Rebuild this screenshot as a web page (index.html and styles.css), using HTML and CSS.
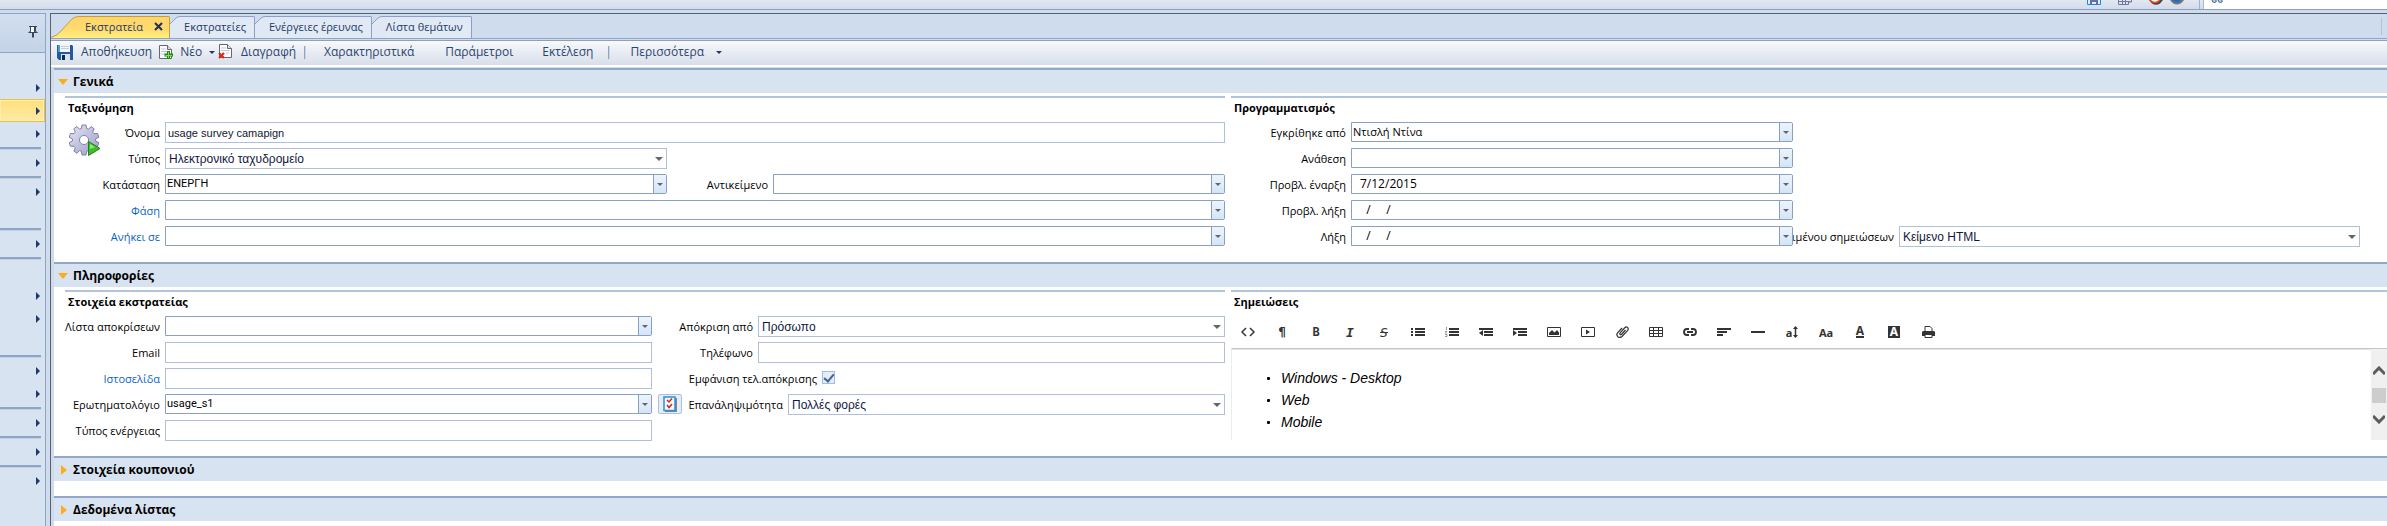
FILE: index.html
```html
<!DOCTYPE html>
<html lang="el">
<head>
<meta charset="utf-8">
<title>Εκστρατεία</title>
<link rel="stylesheet" href="styles.css">
</head>
<body>
<header class="topbar">
  <div class="top-icons">
    <svg width="14" height="5" viewBox="0 0 14 5"><path d="M.5 0v4.500h13V0" fill="#e4eefb" stroke="#0a8cf0"/><path d="M3 0h8v4H9V2H5v2H3z" fill="#6d6ba8"/></svg>
    <svg width="14" height="5" viewBox="0 0 14 5"><path d="M.5 0v4.500h10V2h3V0M.5 1.500h12M4.500 0v4M7.500 0v4" fill="none" stroke="#777799"/></svg>
    <svg width="14" height="5" viewBox="0 0 14 5"><path d="M0 0h14l-3 3.500Q7 6 3 3.500z" fill="#444"/><path d="M1 0q5 5 10 0" fill="#fff" stroke="#f04a20" stroke-width="1.500"/></svg>
    <svg width="14" height="5" viewBox="0 0 14 5"><path d="M0 0h14q-3 4.500-7 4.500T0 0z" fill="#777"/><path d="M2 0h9q-4 5-9 0z" fill="#1c6fc4"/></svg>
  </div>
  <div class="top-search">
    <svg width="12" height="4" viewBox="0 0 12 4"><path d="M1 0q0 2.500 2.500 2.500T5 0M7 0q0 2.500 2.500 2.500T11 0" fill="#9fd0f0" stroke="#55617a"/></svg>
  </div>
</header>

<div class="shell">
  <nav class="side" aria-label="Μενού">
    <div class="side-head">
      <svg width="10" height="12" viewBox="0 0 10 12"><path d="M3 1h3v5H3z" fill="#fff"/><path d="M1 .5h8M2.500 .5v5M7.500 .5v5M1 6.500L2.500 5M9 6.500L7.500 5M.5 6.500h9M4.500 7v4.500M5.500 7v4.500M6.500 1v5" fill="none" stroke="#3c4656"/></svg>
    </div>
    <ul class="side-list">
      <li></li>
      <li class="more"></li>
      <li class="more on"></li>
      <li class="more"></li>
      <li class="sep"></li>
      <li class="more"></li>
      <li class="sep"></li>
      <li class="more"></li>
      <li></li>
      <li class="sep"></li>
      <li class="more"></li>
      <li class="sep"></li>
      <li></li>
      <li class="more"></li>
      <li class="more"></li>
      <li></li>
      <li class="sep"></li>
      <li class="more"></li>
      <li class="more"></li>
      <li class="sep"></li>
      <li class="more"></li>
      <li class="sep"></li>
      <li class="more"></li>
      <li class="sep"></li>
      <li class="more"></li>
    </ul>
  </nav>

  <main class="main">
    <div class="tabs" role="tablist">
      <button class="tab active" role="tab" aria-selected="true">
        <svg class="slope" width="34" height="22" viewBox="0 0 34 22"><defs><linearGradient id="gold" x1="0" y1="0" x2="0" y2="1"><stop offset="0" stop-color="#ffd568"/><stop offset=".6" stop-color="#ffdb70"/><stop offset="1" stop-color="#fff07c"/></linearGradient></defs><path d="M0 22Q6 20 10 15L21 3Q24 .5 28 .5H34V22z" fill="url(#gold)"/><path d="M0 21.500Q6 20 10 15L21 3Q24 .5 28 .5H34" fill="none" stroke="#c99b3f"/></svg>
        <span class="tab-body">Εκστρατεία<svg class="close" width="9" height="9" viewBox="0 0 9 9"><path d="M1 1l7 7M8 1L1 8" stroke="#1f3050" stroke-width="2"/></svg></span>
      </button>
      <button class="tab" role="tab"><svg class="slope" width="14" height="22" viewBox="0 0 14 22"><path d="M0 22V8L6 2Q8 .5 10 .5H14V22z" fill="#dfe8f4"/><path d="M0 8L6 2Q8 .5 10 .5H14" fill="none" stroke="#8ba0c4"/></svg><span class="tab-body">Εκστρατείες</span></button>
      <button class="tab" role="tab"><svg class="slope" width="14" height="22" viewBox="0 0 14 22"><path d="M0 22V8L6 2Q8 .5 10 .5H14V22z" fill="#dfe8f4"/><path d="M0 8L6 2Q8 .5 10 .5H14" fill="none" stroke="#8ba0c4"/></svg><span class="tab-body">Ενέργειες έρευνας</span></button>
      <button class="tab" role="tab"><svg class="slope" width="14" height="22" viewBox="0 0 14 22"><path d="M0 22V8L6 2Q8 .5 10 .5H14V22z" fill="#dfe8f4"/><path d="M0 8L6 2Q8 .5 10 .5H14" fill="none" stroke="#8ba0c4"/></svg><span class="tab-body">Λίστα θεμάτων</span></button>
      <i class="strip-end"></i>
    </div>

    <div class="toolbar" role="toolbar">
      <button class="tool"><svg width="16" height="16" viewBox="0 0 16 16"><path d="M0 1h15l1 1v14H2l-2-2z" fill="#24599c"/><path d="M1 1h2v7H1z" fill="#4f9be0"/><path d="M3 0h10v8H3z" fill="#f2f5f8"/><path d="M4 2h8v1H4zM4 4h8v1H4z" fill="#c4ccd6"/><path d="M4 10h9v6H4z" fill="#d9e2ec"/><path d="M5 11h3v5H5z" fill="#12284a"/></svg>Αποθήκευση</button>
      <button class="tool new"><svg width="14" height="16" viewBox="0 0 14 16"><path d="M.5 1.500h8l4 4v9H.5z" fill="#fdfdfd" stroke="#667"/><path d="M8.500 1.500v4h4" fill="#dde" stroke="#667"/><path d="M2 5h5M2 7.500h6M2 10h4" stroke="#c2c8d2"/><path d="M8 7h3v2.500h3v3h-3V15H8v-2.500H5.500v-3H8z" fill="#1c8a1c"/><path d="M9 8h1v3h3v1h-3v2H9v-2H6.500v-1H9z" fill="#7fe04a"/></svg>Νέο<i class="tri"></i></button>
      <button class="tool del"><svg width="14" height="16" viewBox="0 0 14 16"><path d="M1.500 .5h8l4 4v9h-12z" fill="#fdfdfd" stroke="#667"/><path d="M9.500 .5v4h4" fill="#dde" stroke="#667"/><path d="M3 4h5M3 6.500h8M8 9h3" stroke="#c2c8d2"/><path d="M1 9l5 5M6 9l-5 5" stroke="#d0301c" stroke-width="2.200"/></svg>Διαγραφή</button>
      <i class="bar"></i>
      <button class="tool t1">Χαρακτηριστικά</button>
      <button class="tool t2">Παράμετροι</button>
      <button class="tool t3">Εκτέλεση</button>
      <i class="bar"></i>
      <button class="tool t4">Περισσότερα<i class="tri wide"></i></button>
    </div>

    <section class="sect">
      <h2 class="sect-head"><i class="down"></i>Γενικά</h2>
      <div class="cols">
        <div class="col">
          <h3 class="group">Ταξινόμηση</h3>
          <div class="form general">
            <div class="gear">
              <svg width="32" height="32" viewBox="0 0 32 32"><defs><linearGradient id="gg" x1="0" y1="0" x2="1" y2="1"><stop offset="0" stop-color="#e6e6f4"/><stop offset="1" stop-color="#9c9cc6"/></linearGradient></defs><path fill-rule="evenodd" d="M13 1h4l.6 3.500 2 .7L22 2.500l3.200 2.300-1.500 3.200 1.300 1.700 3.600-.2 1.200 3.800-3.200 1.500v2.200l3.200 1.600-1.200 3.700-3.600-.2-1.300 1.700 1.500 3.200L22 29.300l-2.400-2.700-2 .7L17 31h-4l-.6-3.700-2-.7L8 29.300 4.800 27l1.500-3.200L5 22.100l-3.600.2L.2 18.600 3.400 17v-2.200L.2 13.300l1.200-3.800 3.600.2L6.300 8 4.800 4.800 8 2.500l2.400 2.700 2-.7zM15 11.500a4.500 4.500 0 1 0 .1 0z" fill="url(#gg)" stroke="#7f7fb0"/><path d="M19.500 17.500L31 24.500 19.500 31.500z" fill="#3cc02a" stroke="#1d8018"/><path d="M21 20l5 3-5 2z" fill="#8fe878"/></svg>
            </div>
            <label for="f-name">Όνομα</label><input id="f-name" class="box span" value="usage survey camapign">
            <label for="f-type">Τύπος</label><span class="sel"><select id="f-type"><option>Ηλεκτρονικό ταχυδρομείο</option></select></span>
            <label class="c2" for="f-state">Κατάσταση</label><span class="combo"><input id="f-state" value="ΕΝΕΡΓΗ"><button aria-label="Άνοιγμα"></button></span>
            <label for="f-obj">Αντικείμενο</label><span class="combo"><input id="f-obj"><button aria-label="Άνοιγμα"></button></span>
            <label class="c2 link" for="f-phase">Φάση</label><span class="combo span"><input id="f-phase"><button aria-label="Άνοιγμα"></button></span>
            <label class="c2 link" for="f-parent">Ανήκει σε</label><span class="combo span"><input id="f-parent"><button aria-label="Άνοιγμα"></button></span>
          </div>
        </div>
        <div class="col">
          <h3 class="group">Προγραμματισμός</h3>
          <div class="form plan">
            <label for="p-appr">Εγκρίθηκε από</label><span class="combo"><input id="p-appr" class="ui" value="Ντισλή Ντίνα"><button aria-label="Άνοιγμα"></button></span>
            <label for="p-assign">Ανάθεση</label><span class="combo"><input id="p-assign"><button aria-label="Άνοιγμα"></button></span>
            <label for="p-start">Προβλ. έναρξη</label><span class="combo date"><input id="p-start" value="7/12/2015"><button aria-label="Άνοιγμα"></button></span>
            <label for="p-end">Προβλ. λήξη</label><span class="combo date"><input id="p-end" value="  /     /"><button aria-label="Άνοιγμα"></button></span>
            <label for="p-stop">Λήξη</label><span class="combo date"><input id="p-stop" value="  /     /"><button aria-label="Άνοιγμα"></button></span>
            <label class="cut" for="p-kind">ιμένου σημειώσεων</label><span class="sel"><select id="p-kind"><option>Κείμενο HTML</option></select></span>
          </div>
        </div>
      </div>
    </section>

    <section class="sect">
      <h2 class="sect-head"><i class="down"></i>Πληροφορίες</h2>
      <div class="cols">
        <div class="col">
          <h3 class="group">Στοιχεία εκστρατείας</h3>
          <div class="form info">
            <label for="i-list">Λίστα αποκρίσεων</label><span class="combo"><input id="i-list"><button aria-label="Άνοιγμα"></button></span>
            <div class="pair"><label for="i-by">Απόκριση από</label><span class="sel"><select id="i-by"><option>Πρόσωπο</option></select></span></div>
            <label for="i-mail">Email</label><input id="i-mail" class="box">
            <div class="pair"><label for="i-tel">Τηλέφωνο</label><input id="i-tel" class="box"></div>
            <label class="link" for="i-web">Ιστοσελίδα</label><input id="i-web" class="box">
            <div class="pair check"><label for="i-show">Εμφάνιση τελ.απόκρισης</label><input id="i-show" type="checkbox" checked></div>
            <label for="i-quest">Ερωτηματολόγιο</label><span class="combo"><input id="i-quest" value="usage_s1"><button aria-label="Άνοιγμα"></button></span>
            <div class="pair">
              <button class="quiz" aria-label="Ερωτήσεις"><svg width="14" height="16" viewBox="0 0 14 16"><path d="M2 2h12v14H2z" fill="#7b8796"/><path d="M1 1h11v13.500H1z" fill="#f4f8fc" stroke="#2c8fd8" stroke-width="1.500"/><path d="M4 4l2 2 3-3.500M4 9l2 2.500L9 8" fill="none" stroke="#d02818" stroke-width="1.500"/></svg></button>
              <label for="i-rep">Επανάληψιμότητα</label><span class="sel"><select id="i-rep"><option>Πολλές φορές</option></select></span>
            </div>
            <label for="i-act">Τύπος ενέργειας</label><input id="i-act" class="box">
          </div>
        </div>
        <div class="col">
          <h3 class="group">Σημειώσεις</h3>
          <div class="ed-bar" role="toolbar">
            <button aria-label="HTML"><svg width="14" height="10" viewBox="0 0 14 10"><path d="M5 1L1 5l4 4M9 1l4 4-4 4" fill="none" stroke="#333" stroke-width="1.500"/></svg></button>
            <button class="pil">¶</button>
            <button class="bold">B</button>
            <button class="ital">I</button>
            <button class="strike">S</button>
            <button aria-label="Κουκκίδες"><svg width="14" height="8" viewBox="0 0 14 8"><path d="M0 1h2M0 4h2M0 7h2M4 1h10M4 4h10M4 7h10" stroke="#333" stroke-width="2"/></svg></button>
            <button aria-label="Αρίθμηση"><svg width="14" height="10" viewBox="0 0 14 10"><path d="M4 2h10M4 5h10M4 8h10" stroke="#333" stroke-width="2"/><path d="M1.500 0v3M0 4.500h2M0 6h2M0 7.500h2v2H0" fill="none" stroke="#999"/></svg></button>
            <button aria-label="Μείωση εσοχής"><svg width="14" height="8" viewBox="0 0 14 8"><path d="M0 1h14M5 4h9M5 7h9" stroke="#333" stroke-width="2"/><path d="M4 2v6L0 5z" fill="#333"/></svg></button>
            <button aria-label="Αύξηση εσοχής"><svg width="14" height="8" viewBox="0 0 14 8"><path d="M0 1h14M5 4h9M5 7h9" stroke="#333" stroke-width="2"/><path d="M0 2v6l4-3z" fill="#333"/></svg></button>
            <button aria-label="Εικόνα"><svg width="14" height="10" viewBox="0 0 14 10"><path d="M.5 .5h13v9H.5z" fill="none" stroke="#333"/><path d="M2 8V6l3-3 2.500 2.500L10 3l2 2.500V8z" fill="#333"/></svg></button>
            <button aria-label="Βίντεο"><svg width="14" height="10" viewBox="0 0 14 10"><path d="M.5 .5h13v9H.5z" fill="none" stroke="#333"/><path d="M5 2.500L9 5 5 7.500z" fill="#333"/></svg></button>
            <button aria-label="Αρχείο"><svg width="13" height="12" viewBox="0 0 13 12"><path d="M9.500 4L5.500 8.500Q4.500 9 4 8.300 3.500 7.500 4.200 6.800L8.500 2Q10 .3 11.500 1.400 13 3 11.500 4.600L6 10.500Q3.800 12.300 1.800 10.700 0 8.700 1.600 6.800L6 2" fill="none" stroke="#333" stroke-width="1.200"/></svg></button>
            <button aria-label="Πίνακας"><svg width="14" height="10" viewBox="0 0 14 10"><path d="M.5 .5h13v9H.5zM.5 3.500h13M.5 6.500h13M4.500 0v10M9.500 0v10" fill="none" stroke="#333"/></svg></button>
            <button aria-label="Σύνδεσμος"><svg width="14" height="8" viewBox="0 0 14 8"><path d="M6 1H4Q1 1 1 4t3 3h2M8 1h2q3 0 3 3t-3 3H8M4 4h6" fill="none" stroke="#333" stroke-width="1.800"/></svg></button>
            <button aria-label="Στοίχιση"><svg width="14" height="8" viewBox="0 0 14 8"><path d="M0 1h14M0 4h10M0 7h6" stroke="#333" stroke-width="2"/></svg></button>
            <button aria-label="Γραμμή"><svg width="14" height="2" viewBox="0 0 14 2"><path d="M0 1h14" stroke="#333" stroke-width="2"/></svg></button>
            <button class="size">a<svg width="5" height="12" viewBox="0 0 5 12"><path d="M2.500 1v10" stroke="#333" stroke-width="1.500"/><path d="M2.500 0L5 3H0zM2.500 12L0 9h5z" fill="#333"/></svg></button>
            <button class="face">Aa</button>
            <button class="fore"><span>A</span></button>
            <button class="back"><span>A</span></button>
            <button aria-label="Εκτύπωση"><svg width="13" height="12" viewBox="0 0 13 12"><path d="M3 5V.5h5L10 2.500V5" fill="#fff" stroke="#333"/><path d="M1 5h11l1 1v4H0V6z" fill="#333"/><path d="M3 8.500h7v3H3z" fill="#fff" stroke="#333"/></svg></button>
          </div>
          <div class="ed-body">
            <ul class="notes">
              <li>Windows - Desktop</li>
              <li>Web</li>
              <li>Mobile</li>
            </ul>
            <div class="scroll">
              <svg width="12" height="9" viewBox="0 0 12 9"><path d="M0 8l6-6 6 6" fill="none" stroke="#5c5c5c" stroke-width="3"/></svg>
              <i class="thumb"></i>
              <svg width="12" height="9" viewBox="0 0 12 9"><path d="M0 1l6 6 6-6" fill="none" stroke="#5c5c5c" stroke-width="3"/></svg>
            </div>
          </div>
        </div>
      </div>
    </section>

    <section class="sect closed"><h2 class="sect-head"><i class="right"></i>Στοιχεία κουπονιού</h2></section>
    <section class="sect last"><h2 class="sect-head"><i class="right"></i>Δεδομένα λίστας</h2></section>
  </main>
</div>
</body>
</html>
```

FILE: styles.css
```css
* { box-sizing: border-box; }

body {
  margin: 0;
  min-height: 100vh;
  display: flex;
  flex-direction: column;
  background: #cfdcee;
  font: 12px/16px "Open Sans", "Noto Sans", sans-serif;
  color: #000;
}

button { font: inherit; color: inherit; background: none; border: 0; padding: 0; }
svg { flex: none; display: block; }
h2, h3, ul { margin: 0; padding: 0; }
li { list-style: none; }

/* Top strip */
.topbar {
  display: flex;
  justify-content: flex-end;
  height: 10px;
  flex: none;
  background: linear-gradient(#e2e8f2, #d4dbe8);
  border-bottom: 1px solid #8ba0c4;
}
.top-icons {
  display: flex;
  gap: 17px;
  padding-right: 15px;
  margin-right: 3px;
  border-right: 1px solid #9fb2d0;
}
.top-icons svg:last-child { margin-left: -10px; }
.top-search {
  width: 184px;
  padding-left: 7px;
  background: #fff;
  border-left: 1px solid #a9b8d4;
}

.shell { flex: 1; display: flex; padding-top: 3px; }

/* Side navigation */
.side {
  width: 46px;
  flex: none;
  margin-right: 4px;
  background: #d8e3f1;
  border-top: 1px solid #8fa5c6;
  border-right: 1px solid #8fa5c6;
}
.side-head {
  height: 39px;
  padding: 12px 7px 0 0;
  display: flex;
  justify-content: flex-end;
  align-items: flex-start;
  background: linear-gradient(#d3dff0, #c3d3e8);
  border-bottom: 1px solid #8fa5c6;
}
.side-list li { height: 23px; display: flex; align-items: center; justify-content: flex-end; padding-right: 5px; }
.side-list .more::after {
  content: "";
  border: 4px solid transparent;
  border-left-color: #1f3a66;
  border-right: 0;
}
.side-list .on {
  border: 1px solid #efc046;
  border-left: 0;
  padding-right: 4px;
  background: linear-gradient(#ffe07a, #fdeaa8);
  box-shadow: inset 0 0 0 1px #ffeeb0;
}
.side-list .sep { height: 6px; margin-right: 4px; padding: 0; }
.side-list .sep::after { content: ""; flex: 1; height: 2px; background: #8fa5c6; border-bottom: 1px solid #c4d1e4; }

/* Main area */
.main {
  flex: 1;
  min-width: 0;
  border-top: 1px solid #595f6b;
  border-left: 1px solid #595f6b;
}

.tabs {
  display: flex;
  align-items: flex-end;
  height: 25px;
  font-size: 11px;
  color: #1f3a66;
  border-bottom: 1px solid #8ba5c8;
}
.tab { display: flex; height: 22px; }
.tab-body {
  display: flex;
  align-items: center;
  height: 22px;
  padding: 0 8px 2px 0;
  border-top: 1px solid #8ba0c4;
  border-right: 1px solid #8ba0c4;
  border-top-right-radius: 2px;
  background: linear-gradient(#dfe8f4, #e2ebf5);
}
.active .tab-body {
  gap: 11px;
  padding-right: 6px;
  border-color: #c99b3f;
  background: linear-gradient(#ffd568, #ffdb70 60%, #fff07c);
}
.strip-end { width: 1px; height: 17px; margin: 0 5px 3px auto; background: #b4c2d9; }

.toolbar {
  display: flex;
  align-items: center;
  height: 27px;
  margin-top: 1px;
  padding: 0 0 2px 6px;
  color: #2a466f;
  border-top: 1px solid #999ea6;
  border-bottom: 2px solid #fff;
  background: linear-gradient(#f6f9fc, #d8dee9);
}
.tool { display: flex; align-items: center; gap: 8px; }
.new { margin-left: 7px; gap: 7px; }
.del { margin-left: 3px; gap: 9px; }
.del + .bar { margin-left: 8px; }
.bar { width: 2px; height: 13px; background: #8ba5c8; border-right: 1px solid #c9d6e8; }
.t1 { margin-left: 18px; }
.t2 { margin-left: 31px; }
.t3 { margin-left: 29px; }
.t3 + .bar { margin-left: 15px; }
.t4 { margin-left: 20px; }
.tri { border: 3px solid transparent; border-top-color: #1f3a66; border-bottom: 0; }
.tri.wide { margin-left: 4px; }

/* Sections */
.sect { margin-left: 3px; background: #fff; padding-bottom: 15px; }
.toolbar + .sect { margin-top: 1px; }
.sect.last { padding-bottom: 5px; }
.sect-head {
  display: flex;
  align-items: center;
  height: 25px;
  padding-left: 4px;
  font-size: 12px;
  font-weight: 700;
  border-top: 2px solid #93a7c8;
  background: #d8e3f1;
}
.down { border: 5px solid transparent; border-top: 6px solid #ffab1c; border-bottom: 0; margin-right: 5px; }
.right { border: 5px solid transparent; border-left: 6px solid #ffab1c; border-right: 0; margin: 0 6px 0 3px; }

.cols {
  display: grid;
  grid-template-columns: 1160fr 1156fr;
  column-gap: 6px;
  padding: 3px 0 0 11px;
}
.col { min-width: 0; border-top: 2px solid #b0c4de; }
.group { height: 24px; padding-left: 3px; font-size: 11px; font-weight: 700; line-height: 19px; }

.form { display: grid; grid-auto-rows: 21px; row-gap: 5px; }
.form label { padding-right: 5px; text-align: right; font-size: 11px; line-height: 22px; white-space: nowrap; }
.form .link { color: #0a64c8; }
.general { grid-template-columns: 36px 64px 502fr 106px 452fr; }
.general .gear { grid-row: 1 / 3; padding: 2px 0 0 4px; }
.general .c2 { grid-column: 2; }
.general .span { grid-column: 3 / 6; }
.general .sel { grid-column: 3; }
.general label[for="f-type"] { grid-column: 2; }
.plan { grid-template-columns: 120px 442fr 106px 461fr 27px; }
.plan label:not(.cut) { grid-column: 1; }
.plan .cut { overflow: hidden; display: flex; justify-content: flex-end; }
.info { grid-template-columns: 100px 487fr 573fr; }
.info > label { grid-column: 1; margin-left: -4px; }
.pair { display: flex; }
.pair label { width: 106px; flex: none; }
.pair .sel, .pair .box { flex: 1; }
.pair.check label { width: 170px; }

/* Fields */
.box, .sel, .combo { height: 21px; min-width: 0; width: 100%; background: #fff; border: 1px solid #b0c0dc; }
input { font: 11px "Liberation Sans", Arial, sans-serif; color: #101830; }
.box { padding: 0 2px; }
.sel { position: relative; display: flex; }
.sel select { appearance: none; flex: 1; border: 0; padding: 0 20px 0 3px; background: none; font: 12px "Liberation Sans", Arial, sans-serif; color: #101840; }
.sel::after {
  content: "";
  position: absolute;
  top: 8px;
  right: 3px;
  border: 4px solid transparent;
  border-top-color: #5f6670;
  border-bottom: 0;
  pointer-events: none;
}
.combo { display: flex; height: 20px; border-color: #8aa0c2; border-radius: 0 2px 2px 0; }
.combo input { flex: 1; min-width: 0; border: 0; padding: 0 0 1px 1px; background: none; font-family: Roboto, sans-serif; color: #000; }
.combo .ui { font-family: "Open Sans", sans-serif; }
.combo.date input { padding-left: 8px; font: 12px "Open Sans", sans-serif; white-space: pre; }
.combo button {
  width: 13px;
  flex: none;
  display: flex;
  align-items: center;
  justify-content: center;
  border-left: 1px solid #8aa0c2;
  background: linear-gradient(#ecf4fc, #d4e5f6);
}
.combo button::after { content: ""; border: 3px solid transparent; border-top-color: #5f6670; border-bottom: 0; }

.check input {
  appearance: none;
  width: 13px;
  height: 13px;
  margin: 3px 0 0;
  display: flex;
  align-items: center;
  justify-content: center;
  border: 1px solid #a4bce0;
  background: #e4ecf6;
}
.check input:checked::after {
  content: "";
  width: 4px;
  height: 8px;
  margin-top: -2px;
  border: solid #41659a;
  border-width: 0 2px 2px 0;
  transform: rotate(40deg);
}
.quiz {
  display: flex;
  align-items: center;
  justify-content: center;
  width: 24px;
  height: 20px;
  margin-left: 6px;
  border: 1px solid #b0c0dc;
  border-radius: 2px;
  background: #e4edf9;
}

/* Notes editor */
.ed-bar { display: flex; height: 32px; color: #333; }
.ed-bar button {
  width: 34px;
  display: flex;
  align-items: center;
  justify-content: center;
  font: 700 12px "Noto Sans", sans-serif;
}
.ed-bar .pil { font-family: "DejaVu Sans", sans-serif; }
.ed-bar .bold { font-family: "DejaVu Sans Mono", monospace; }
.ed-bar .ital { font: italic 700 13px "DejaVu Sans Mono", monospace; }
.ed-bar .strike { font: italic 400 13px "DejaVu Sans Mono", monospace; text-decoration: line-through; }
.ed-bar .size { gap: 1px; font-size: 11px; }
.ed-bar .face { font-size: 11px; }
.fore span { height: 12px; line-height: 10px; border-bottom: 2px solid #333; }
.back span { width: 12px; height: 12px; line-height: 12px; background: #333; color: #fff; }

.ed-body {
  display: flex;
  height: 92px;
  border-top: 1px solid #c6c6c6;
  border-left: 1px solid #ececec;
  box-shadow: inset 0 1px #e4e4e4;
}
.notes { flex: 1; padding: 18px 0 0 49px; font: italic 14px/22px "Liberation Sans", Arial, sans-serif; }
.notes li { display: flex; align-items: center; }
.notes li::before { content: ""; width: 3px; height: 3px; margin: 0 11px 0 -14px; border-radius: 1px; background: #000; }
.scroll {
  width: 16px;
  display: flex;
  flex-direction: column;
  align-items: center;
  padding: 17px 0 16px;
  justify-content: space-between;
  background: #f0f0f0;
}
.thumb { width: 14px; height: 15px; background: #cdcdcd; }
```
